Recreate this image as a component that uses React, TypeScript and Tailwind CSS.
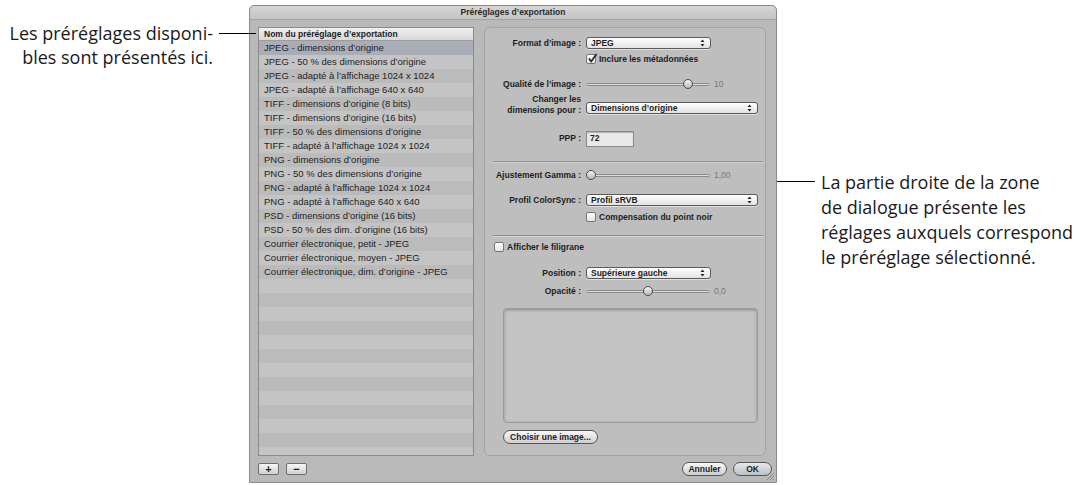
import React from "react";

const presets = [
  "JPEG - dimensions d’origine",
  "JPEG - 50 % des dimensions d’origine",
  "JPEG - adapté à l’affichage 1024 x 1024",
  "JPEG - adapté à l’affichage 640 x 640",
  "TIFF - dimensions d’origine (8 bits)",
  "TIFF - dimensions d’origine (16 bits)",
  "TIFF - 50 % des dimensions d’origine",
  "TIFF - adapté à l’affichage 1024 x 1024",
  "PNG - dimensions d’origine",
  "PNG - 50 % des dimensions d’origine",
  "PNG - adapté à l’affichage 1024 x 1024",
  "PNG - adapté à l’affichage 640 x 640",
  "PSD - dimensions d’origine (16 bits)",
  "PSD - 50 % des dim. d’origine (16 bits)",
  "Courrier électronique, petit - JPEG",
  "Courrier électronique, moyen - JPEG",
  "Courrier électronique, dim. d’origine - JPEG",
];

const listRows = [...presets, ...Array(14).fill("")];

function Arrows() {
  return (
    <svg width="5" height="8" viewBox="0 0 5 8" className="shrink-0">
      <path d="M2.5 0.5 L4.5 3 L0.5 3 Z M2.5 7.5 L4.5 5 L0.5 5 Z" fill="#222" />
    </svg>
  );
}

function Popup({ label, width }: { label: string; width: string }) {
  return (
    <div className={`${width} h-[12px] flex items-center justify-between pl-[4px] pr-[5px] rounded-[3px] border border-[#5a5a5a] bg-gradient-to-b from-[#ffffff] to-[#e2e2e2] shadow-[0_1px_0_rgba(255,255,255,0.5)]`}>
      <span className="text-[8.5px] font-bold text-[#1d1d1d] leading-none">{label}</span>
      <Arrows />
    </div>
  );
}

function Checkbox({ checked, label }: { checked?: boolean; label: string }) {
  return (
    <div className="flex items-center gap-[3px]">
      <div className="w-[10px] h-[10px] rounded-[2px] border border-[#777] bg-gradient-to-b from-[#fdfdfd] to-[#e6e6e6] relative">
        {checked && (
          <svg width="11" height="11" viewBox="0 0 11 11" className="absolute -top-[2px] left-0">
            <path d="M2 5.5 L4.2 8.5 L9.5 1" stroke="#2a2a2a" strokeWidth="1.8" fill="none" />
          </svg>
        )}
      </div>
      <span className="text-[8.5px] font-bold text-[#1d1d1d]">{label}</span>
    </div>
  );
}

function Slider({ thumb, value }: { thumb: string; value: string }) {
  return (
    <div className="flex items-center gap-[4px]">
      <div className="relative w-[124px] h-[12px]">
        <div className="absolute left-0 right-0 top-[5px] h-[3px] rounded-full border border-[#8a8a8a] bg-[#dcdcdc]" />
        <div className={`absolute ${thumb} top-[1px] w-[10px] h-[10px] rounded-full border-[1.5px] border-[#4a4a4a] bg-gradient-to-b from-[#f4f4f4] to-[#b8b8b8]`} />
      </div>
      <span className="text-[8.5px] text-[#7a7a7a]">{value}</span>
    </div>
  );
}

function Label({ children }: { children: React.ReactNode }) {
  return <div className="w-[96px] shrink-0 text-right text-[8.5px] font-bold text-[#1d1d1d] leading-[11px]">{children}</div>;
}

function PillButton({ label, width }: { label: string; width: string }) {
  return (
    <div className={`${width} h-[14px] rounded-full border border-[#555] bg-gradient-to-b from-[#f8f8f8] to-[#cfcfcf] flex items-center justify-center text-[8.5px] font-bold text-[#1d1d1d]`}>
      {label}
    </div>
  );
}

export default function App() {
  return (
    <div className="relative w-[1076px] h-[485px] bg-white overflow-hidden flex font-['Liberation_Sans',Arial,sans-serif]">
      {/* left caption */}
      <div className="w-[249px] shrink-0 pt-[21px] pr-[36px] text-right text-[18px] leading-[24px] text-[#1a1a1a] font-['Open_Sans',sans-serif]">
        Les préréglages disponi-
        <br />
        bles sont présentés ici.
      </div>

      {/* dialog */}
      <div className="mt-[5px] w-[528px] h-[478px] shrink-0 flex flex-col rounded-t-[5px] border border-[#8c8c8c] bg-[#b9b9b9] relative">
        <div className="h-[14px] shrink-0 flex items-center justify-center rounded-t-[5px] bg-gradient-to-b from-[#d6d6d6] to-[#c3c3c3] border-b border-[#a4a4a4]">
          <span className="text-[8.5px] font-bold text-[#2a2a2a]">Préréglages d’exportation</span>
        </div>

        <div className="flex pl-[8px] pr-[10px] pt-[7px] gap-[10px]">
          {/* preset list */}
          <div className="w-[216px] h-[429px] border border-[#8a8a8a] overflow-hidden flex flex-col">
            <div className="h-[13px] shrink-0 flex items-center pl-[5px] bg-gradient-to-b from-[#f0f0f0] to-[#d8d8d8] border-b border-[#9c9c9c] text-[8.5px] font-bold text-[#1d1d1d]">
              Nom du préréglage d’exportation
            </div>
            {listRows.map((name, i) => (
              <div
                key={i}
                className={`h-[14px] shrink-0 flex items-center pl-[5px] text-[9.5px] text-[#1e1e1e] whitespace-nowrap ${
                  i === 0 ? "bg-[#a8adb8]" : i % 2 === 1 ? "bg-[#c4c4c4]" : "bg-[#bbbbbb]"
                }`}
              >
                {name}
              </div>
            ))}
          </div>

          {/* settings panel */}
          <div className="w-[282px] h-[429px] rounded-[6px] border border-[#a3a3a3] bg-[#bebebe] flex flex-col">
            <div className="mt-[9px] h-[12px] flex items-center gap-[5px]">
              <Label>Format d’image :</Label>
              <Popup label="JPEG" width="w-[125px]" />
            </div>
            <div className="mt-[5px] h-[10px] flex items-center pl-[101px]">
              <Checkbox checked label="Inclure les métadonnées" />
            </div>
            <div className="mt-[14px] h-[12px] flex items-center gap-[5px]">
              <Label>Qualité de l’image :</Label>
              <Slider thumb="left-[97px]" value="10" />
            </div>
            <div className="mt-[4px] h-[22px] flex items-end gap-[5px]">
              <Label>
                Changer les
                <br />
                dimensions pour :
              </Label>
              <div className="mb-[2px]">
                <Popup label="Dimensions d’origine" width="w-[172px]" />
              </div>
            </div>
            <div className="mt-[14px] h-[17px] flex items-center gap-[5px]">
              <Label>PPP :</Label>
              <div className="w-[48px] h-[16px] border border-[#8a8a8a] bg-[#e9e9e9] shadow-[inset_0_1px_1px_rgba(0,0,0,0.25)] flex items-center pl-[3px] text-[8.5px] font-bold text-[#1d1d1d]">
                72
              </div>
            </div>
            <div className="mt-[14px] ml-[8px] mr-[2px] h-px bg-[#8f8f8f] shadow-[0_1px_0_#d4d4d4]" />
            <div className="mt-[7px] h-[12px] flex items-center gap-[5px]">
              <Label>Ajustement Gamma :</Label>
              <Slider thumb="left-0" value="1,00" />
            </div>
            <div className="mt-[13px] h-[12px] flex items-center gap-[5px]">
              <Label>Profil ColorSync :</Label>
              <Popup label="Profil sRVB" width="w-[172px]" />
            </div>
            <div className="mt-[6px] h-[10px] flex items-center pl-[101px]">
              <Checkbox label="Compensation du point noir" />
            </div>
            <div className="mt-[13px] ml-[8px] mr-[2px] h-px bg-[#8f8f8f] shadow-[0_1px_0_#d4d4d4]" />
            <div className="mt-[6px] h-[10px] flex items-center pl-[9px]">
              <Checkbox label="Afficher le filigrane" />
            </div>
            <div className="mt-[15px] h-[12px] flex items-center gap-[5px]">
              <Label>Position :</Label>
              <Popup label="Supérieure gauche" width="w-[125px]" />
            </div>
            <div className="mt-[6px] h-[12px] flex items-center gap-[5px]">
              <Label>Opacité :</Label>
              <Slider thumb="left-[57px]" value="0,0" />
            </div>
            <div className="mt-[11px] ml-[18px] w-[255px] h-[115px] rounded-[4px] border border-[#9a9a9a] bg-[#c3c3c3] shadow-[inset_0_1px_3px_rgba(0,0,0,0.3)]" />
            <div className="mt-[7px] ml-[18px]">
              <PillButton label="Choisir une image..." width="w-[95px]" />
            </div>
          </div>
        </div>

        {/* bottom bar */}
        <div className="flex items-center pl-[8px] pr-[4px] pt-[6px]">
          <div className="flex gap-[7px]">
            <div className="w-[21px] h-[12px] rounded-[2px] border border-[#6e6e6e] bg-gradient-to-b from-[#f6f6f6] to-[#d0d0d0] flex items-center justify-center text-[11px] font-bold leading-none text-[#222]">+</div>
            <div className="w-[21px] h-[12px] rounded-[2px] border border-[#6e6e6e] bg-gradient-to-b from-[#f6f6f6] to-[#d0d0d0] flex items-center justify-center text-[11px] font-bold leading-none text-[#222]">−</div>
          </div>
          <div className="ml-auto flex gap-[6px]">
            <PillButton label="Annuler" width="w-[45px]" />
            <div className="w-[39px] h-[14px] rounded-full border border-[#555] bg-gradient-to-b from-[#e6e9ee] to-[#bcc0c8] flex items-center justify-center text-[8.5px] font-bold text-[#1d1d1d]">
              OK
            </div>
          </div>
        </div>

        {/* resize grip */}
        <svg width="10" height="10" viewBox="0 0 10 10" className="absolute right-[1px] bottom-[1px]">
          <path d="M9 2 L2 9 M9 5 L5 9 M9 8 L8 9" stroke="#8a8a8a" strokeWidth="1" />
        </svg>
      </div>

      {/* right caption */}
      <div className="pl-[44px] pt-[170px] text-[18px] leading-[25px] text-[#1a1a1a] whitespace-nowrap font-['Open_Sans',sans-serif]">
        La partie droite de la zone
        <br />
        de dialogue présente les
        <br />
        réglages auxquels correspond
        <br />
        le préréglage sélectionné.
      </div>

      {/* leader lines */}
      <div className="absolute top-[33px] left-[219px] w-[37px] h-px bg-black" />
      <div className="absolute top-[181px] left-[777px] w-[38px] h-px bg-black" />
    </div>
  );
}
